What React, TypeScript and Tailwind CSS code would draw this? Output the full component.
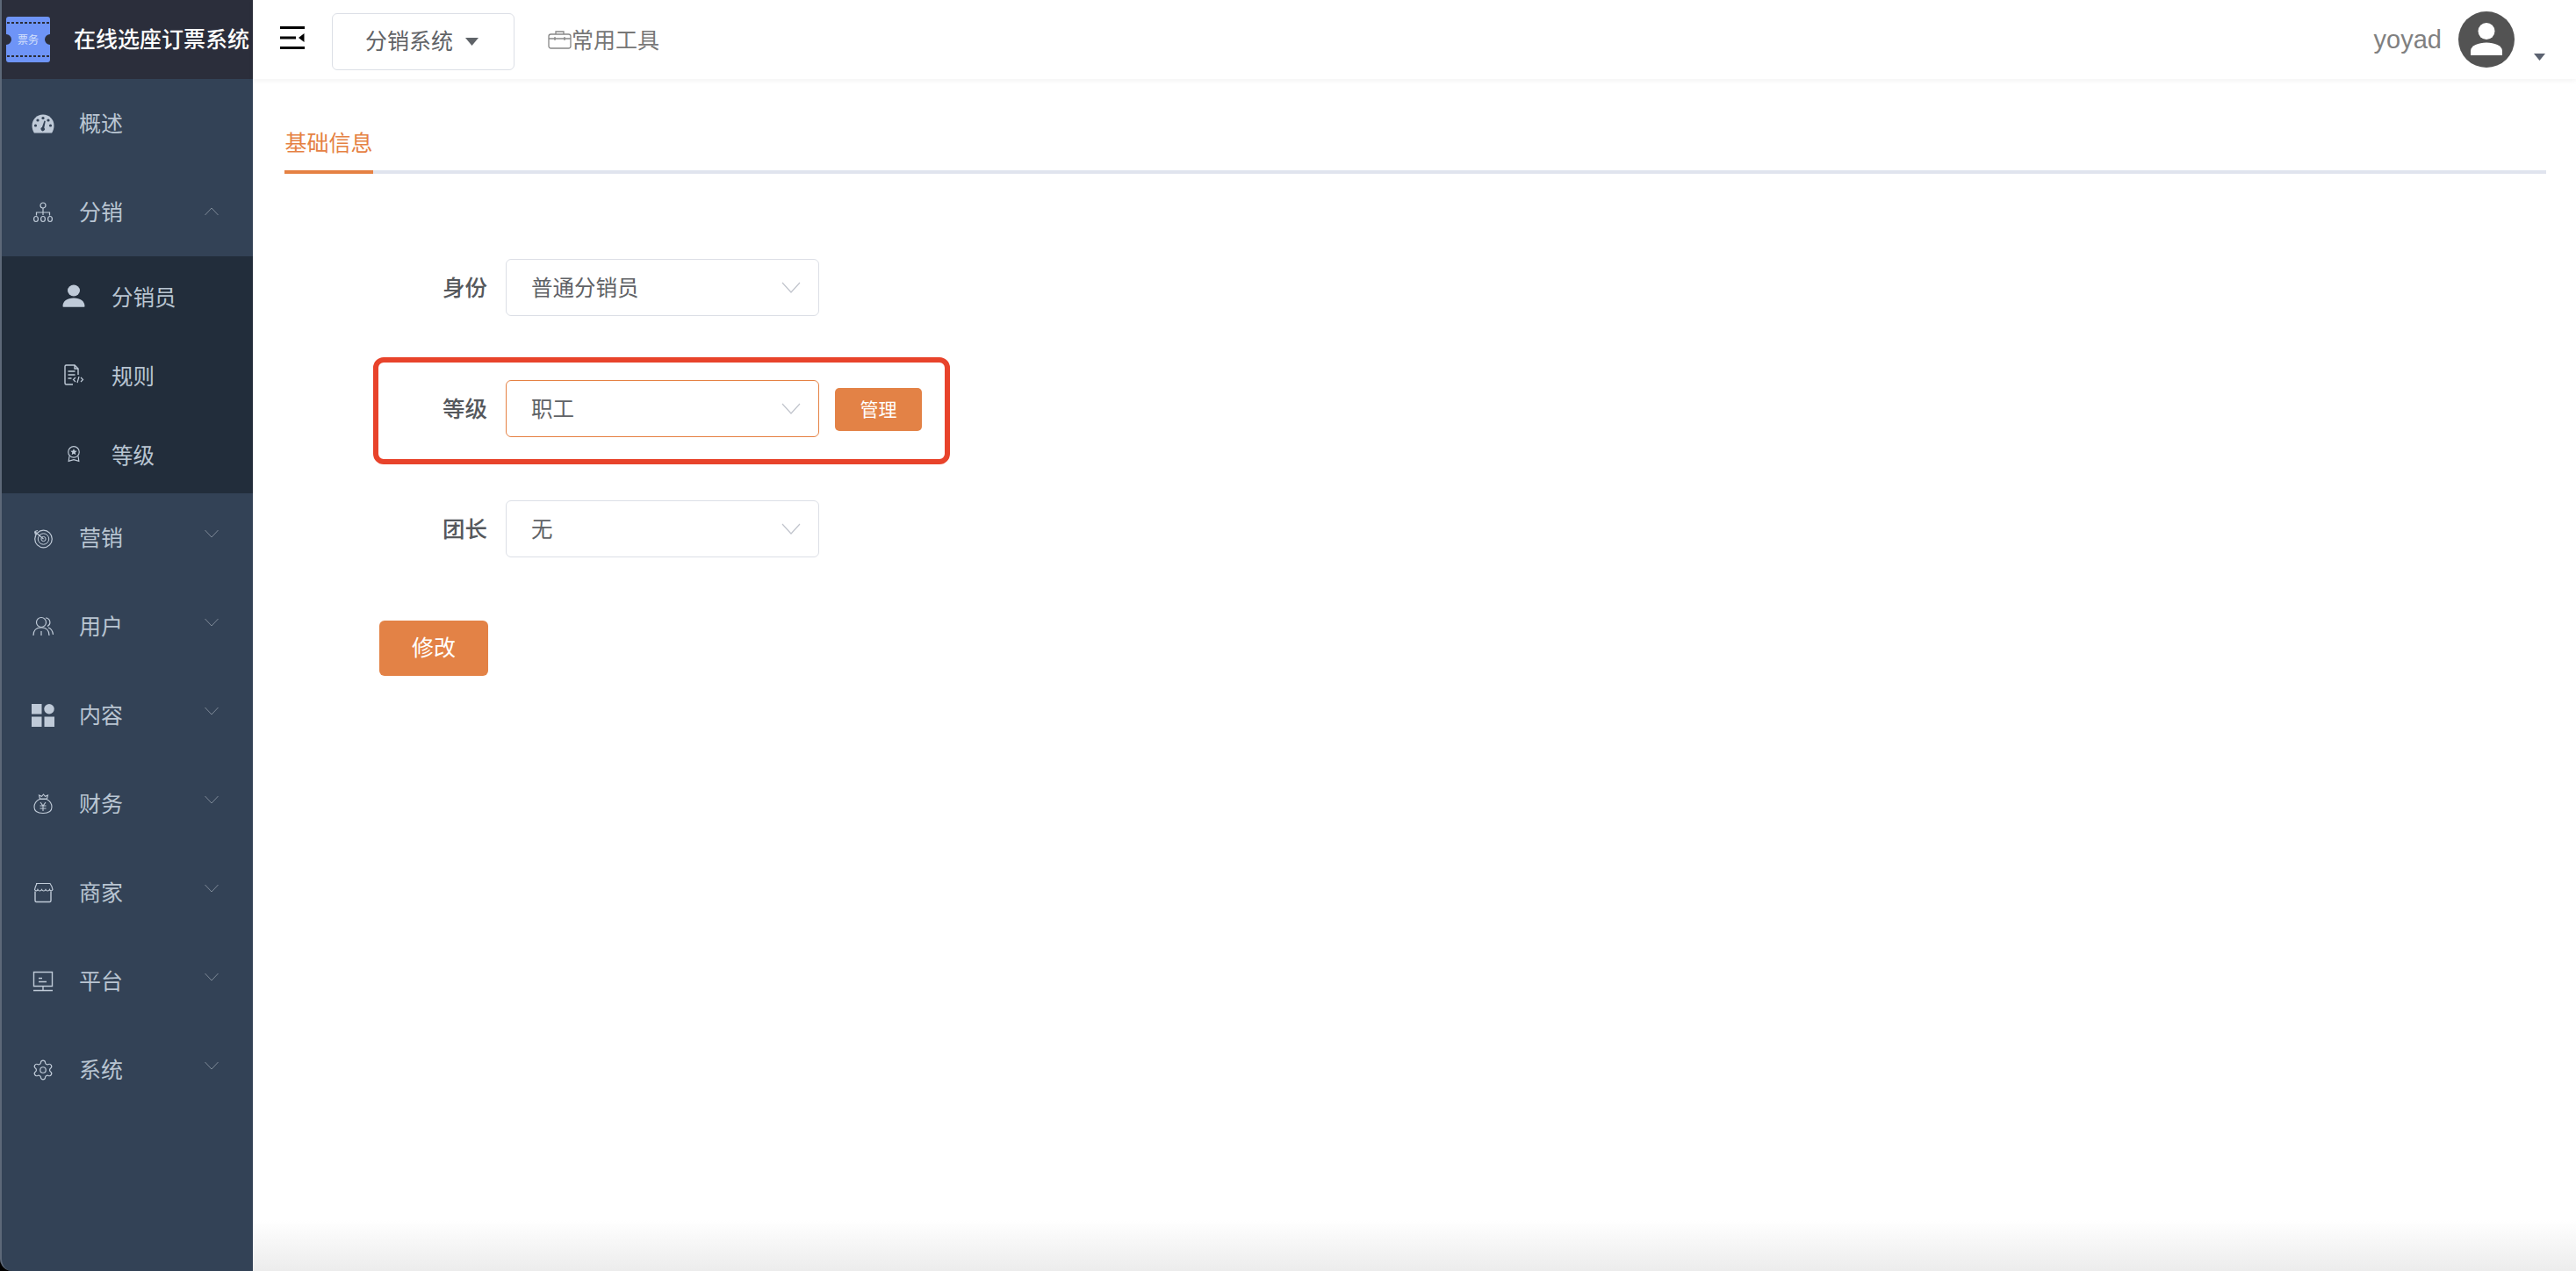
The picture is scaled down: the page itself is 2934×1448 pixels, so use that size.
import type { ReactNode } from "react";
import { Settings } from "lucide-react";

const fontStack = '"Liberation Sans", "Noto Sans CJK SC", sans-serif';

function Svg({ children, className = "w-6 h-6" }: { children: ReactNode; className?: string }) {
  return (
    <svg className={className} viewBox="0 0 24 24" fill="none" stroke="currentColor" strokeWidth="1.200">
      {children}
    </svg>
  );
}

const GaugeIcon = () => (
  <svg className="w-[26px] h-[22px] text-[#bfcad8]" viewBox="0 0 26 22" fill="currentColor">
    <path d="M13 0.5C6 0.5 0.5 6 0.5 13c0 3 .8 6 2.4 8.5h20.2c1.6-2.5 2.4-5.5 2.4-8.5C25.500 6 20 .5 13 .5z" />
    <g fill="#334256">
      <circle cx="13" cy="4.500" r="1.600" />
      <circle cx="7" cy="7" r="1.600" />
      <circle cx="19" cy="7" r="1.600" />
      <circle cx="4.500" cy="13" r="1.600" />
      <circle cx="21.500" cy="13" r="1.600" />
      <path d="M14.500 7.500 15.800 8 14.300 15.500a2.200 2.200 0 1 1-2.400-.5z" />
    </g>
  </svg>
);

const TreeIcon = () => (
  <Svg>
    <circle cx="12" cy="4" r="3" />
    <path d="M12 7v8M4.500 15.500V12h15v3.500" />
    <ellipse cx="4" cy="19.500" rx="2.400" ry="3" />
    <ellipse cx="12" cy="19.500" rx="2.400" ry="3" />
    <ellipse cx="20" cy="19.500" rx="2.400" ry="3" />
  </Svg>
);

const PersonIcon = () => (
  <svg className="w-[26px] h-[26px] text-[#bfcad8]" viewBox="0 0 26 26" fill="currentColor">
    <ellipse cx="13" cy="7" rx="7" ry="6.500" />
    <path d="M.5 25c0-6 5-9.500 12.500-9.500S25.500 19 25.500 25c0 .5-.3.800-.8.800H1.300c-.5 0-.8-.3-.8-.8z" />
  </svg>
);

const DocCodeIcon = () => (
  <Svg>
    <path d="M17 12V5l-4-4H3.500A1.500 1.500 0 0 0 2 2.500v19A1.500 1.500 0 0 0 3.500 23H11" strokeWidth="1.400" />
    <path d="M13 1v4h4M5.500 8h8M5.500 12h8M5.500 16h4" strokeWidth="1.400" />
    <path d="M14 15l-2.500 2.500L14 20M20 15l2.500 2.500L20 20M18 14l-2 7" strokeWidth="1.200" />
  </Svg>
);

const BadgeIcon = () => (
  <Svg className="w-5 h-5">
    <circle cx="12" cy="9.500" r="7.500" strokeWidth="1.400" />
    <path d="M12 5l1.300 2.900 3.100.3-2.300 2.100.7 3.100-2.800-1.600-2.800 1.600.7-3.100-2.300-2.100 3.100-.3z" fill="currentColor" stroke="none" />
    <path d="M6 15l-1 7 7-2 7 2-1-7" strokeWidth="1.400" />
  </Svg>
);

const TargetIcon = () => (
  <Svg>
    <circle cx="12.500" cy="13" r="9.800" strokeWidth="1.200" />
    <circle cx="12.500" cy="13" r="6.200" strokeWidth="1" />
    <circle cx="12.500" cy="13" r="2.600" strokeWidth="1" />
    <path d="M12.500 13 2.500 4.500M2.500 4.500l3.500-1M2.500 4.500l1 3.500" strokeWidth="1.200" />
  </Svg>
);

const UsersIcon = () => (
  <Svg>
    <circle cx="10" cy="7" r="5.500" />
    <path d="M1 22c0-6 3-9 9-9s9 3 9 9M10 17v5" />
    <path d="M15 2a5 5 0 0 1 2 9.500M18 13c3 1 5 4 5.500 8" />
  </Svg>
);

const GridIcon = () => (
  <svg className="w-[26px] h-[26px] text-[#bfcad8]" viewBox="0 0 26 26" fill="currentColor">
    <rect x="0" y="0" width="11.500" height="11.500" />
    <circle cx="20" cy="5.750" r="5.750" />
    <rect x="0" y="14.500" width="11.500" height="11.500" />
    <rect x="14.500" y="14.500" width="11.500" height="11.500" />
  </svg>
);

const MoneyBagIcon = () => (
  <Svg>
    <path d="M8.500 6 7.500 2l3 1.300L12.500 1l2 2.300 3-1.300-1 4z" strokeWidth="1.100" />
    <path d="M8 6.500c-4 2-6 5.500-6 9 0 4.500 3.500 7 10 7s10-2.500 10-7c0-3.500-2-7-6-9z" strokeWidth="1.100" />
    <path d="M9 10l3 4 3-4M8.500 14h7M8.500 17h7M12 14v6" strokeWidth="1.100" />
  </Svg>
);

const ShopIcon = () => (
  <Svg>
    <path d="M4 1.500h16c1.500 2 2.500 4 3 7-1 2-3 1.500-3.500 0-1 2-3.500 2-4.500 0-1 2-3.500 2-4.500 0-1 2-3.500 2-4.500 0-.5 1.500-2.500 2-3.500 0 .5-3 1.500-5 2.500-7z" />
    <path d="M3 10.500V21a1.500 1.500 0 0 0 1.500 1.500h15A1.500 1.500 0 0 0 21 21V10.500" strokeWidth="1.400" />
  </Svg>
);

const MonitorIcon = () => (
  <Svg>
    <path d="M1.500 1.500h21v16h-21zM7 8.500h4M7 12.500h9M1 22.500h22M12 18v4" strokeWidth="1.400" />
  </Svg>
);

function Chevron({ up = false }: { up?: boolean }) {
  return (
    <svg className="w-4 h-[10px] text-[#7f8a98]" viewBox="0 0 16 10" fill="none" stroke="currentColor" strokeWidth="1">
      <path d={up ? "M.5 9 8 1l7.500 8" : "M.5 1 8 9l7.500-8"} />
    </svg>
  );
}

function NavItem({ icon, label, open = false, arrow = true }: { icon: ReactNode; label: string; open?: boolean; arrow?: boolean }) {
  return (
    <div className="h-[101px] flex items-center pl-[34px] pr-[39px] text-[#c0cbd8]">
      <div className="w-[26px] flex justify-center shrink-0">{icon}</div>
      <span className="ml-7 text-[25px] text-[#b9c5d2] translate-y-[1px]">{label}</span>
      {arrow && (
        <div className={open ? "ml-auto -translate-y-[1px]" : "ml-auto -translate-y-[5px]"}>
          <Chevron up={open} />
        </div>
      )}
    </div>
  );
}

function SubItem({ icon, label }: { icon: ReactNode; label: string }) {
  return (
    <div className="h-[90px] flex items-center pl-[69px] text-[#c0cbd8]">
      <div className="w-[26px] flex justify-center shrink-0">{icon}</div>
      <span className="ml-[30px] text-[24.500px] text-[#b9c5d2] translate-y-[3px]">{label}</span>
    </div>
  );
}

function Sidebar() {
  return (
    <aside className="w-[288px] shrink-0 border-l-2 border-[#5d6878] rounded-bl-[14px] bg-[#334256] flex flex-col overflow-hidden">
      <div className="h-[90px] bg-[#2b2e3b] flex items-center shrink-0">
        <svg className="w-[50px] h-[52px] ml-[5px] shrink-0" viewBox="0 0 50 52">
          <path d="M3 0h44a3 3 0 0 1 3 3v17a6 6 0 0 0 0 12v17a3 3 0 0 1-3 3H3a3 3 0 0 1-3-3V32a6 6 0 0 0 0-12V3a3 3 0 0 1 3-3z" fill="#6e94f7" />
          <path d="M1 7h48M1 45h48" stroke="#2b2e3b" strokeWidth="2" strokeDasharray="3 2" />
          <text x="25" y="31" textAnchor="middle" fontSize="12" fill="#d5e0fb">票务</text>
        </svg>
        <span className="ml-[27px] text-[25px] text-white font-medium whitespace-nowrap translate-y-[1px]">在线选座订票系统</span>
      </div>
      <NavItem icon={<GaugeIcon />} label="概述" arrow={false} />
      <NavItem icon={<TreeIcon />} label="分销" open />
      <div className="bg-[#222d3b]">
        <SubItem icon={<PersonIcon />} label="分销员" />
        <SubItem icon={<DocCodeIcon />} label="规则" />
        <SubItem icon={<BadgeIcon />} label="等级" />
      </div>
      <NavItem icon={<TargetIcon />} label="营销" />
      <NavItem icon={<UsersIcon />} label="用户" />
      <NavItem icon={<GridIcon />} label="内容" />
      <NavItem icon={<MoneyBagIcon />} label="财务" />
      <NavItem icon={<ShopIcon />} label="商家" />
      <NavItem icon={<MonitorIcon />} label="平台" />
      <NavItem icon={<Settings size={28} strokeWidth={1.1} />} label="系统" />
    </aside>
  );
}

function Header() {
  return (
    <header className="h-[90px] shrink-0 bg-white shadow-[0_2px_6px_rgba(0,0,0,0.05)] flex items-center pl-[31px] pr-[35px]">
      <svg className="w-7 h-[26px] -translate-y-[2px]" viewBox="0 0 28 26" fill="#000">
        <rect x="0" y="0" width="28" height="3" />
        <rect x="0" y="11.500" width="18" height="3" />
        <rect x="0" y="23" width="28" height="3" />
        <path d="M27.500 8v10L21 13z" />
      </svg>
      <div className="ml-[31px] w-[208px] h-[65px] border border-[#dcdfe6] rounded-[6px] flex items-center pl-[37px] text-[#606266] text-[25px] translate-y-[2px]">
        <span className="translate-y-[1px]">分销系统</span>
        <svg className="ml-[14px] w-[15px] h-[9px]" viewBox="0 0 15 9" fill="#5f6368">
          <path d="M0 0h15L7.500 9z" />
        </svg>
      </div>
      <svg className="ml-[38px] w-[27px] h-[22px] text-[#888]" viewBox="0 0 27 22" fill="none" stroke="currentColor" strokeWidth="1.300">
        <rect x="1" y="5" width="25" height="16" rx="2.500" />
        <path d="M9 5V2h9v3M1 10h25M8 8v4M19 8v4" />
      </svg>
      <span className="text-[#777] text-[25px] translate-y-[2px]">常用工具</span>
      <div className="ml-auto flex items-center">
        <span className="text-[#808080] text-[29px] translate-y-[1px]">yoyad</span>
        <svg className="ml-[19px] w-16 h-16" viewBox="0 0 64 64">
          <circle cx="32" cy="32" r="32" fill="#535353" />
          <circle cx="32" cy="22.500" r="9.500" fill="#fff" />
          <path d="M14 50v-5c0-6 9-9.500 18-9.500S50 39 50 45v5z" fill="#fff" />
        </svg>
        <svg className="ml-[22px] w-[13px] h-2 translate-y-[20px]" viewBox="0 0 13 8" fill="#5b6270">
          <path d="M0 0h13L6.500 8z" />
        </svg>
      </div>
    </header>
  );
}

function SelectBox({ value, focused = false }: { value: string; focused?: boolean }) {
  return (
    <div
      className={
        "w-[357px] h-[65px] rounded-[6px] border flex items-center pl-[28px] pr-[20px] bg-white text-[#606266] text-[24.500px] " +
        (focused ? "border-[#e58143]" : "border-[#dcdfe6]")
      }
    >
      <span className="translate-y-[2px]">{value}</span>
      <svg className="ml-auto w-[22px] h-[13px] text-[#c0c4cc]" viewBox="0 0 22 13" fill="none" stroke="currentColor" strokeWidth="1.200">
        <path d="M1 1l10 11L21 1" />
      </svg>
    </div>
  );
}

function FieldLabel({ children }: { children: ReactNode }) {
  return <label className="w-[52px] text-[#55585c] text-[25.500px] font-medium text-right mr-[21px] whitespace-nowrap translate-y-[1px]">{children}</label>;
}

function MainContent() {
  return (
    <main className="flex-1 pl-[36px] pr-[34px] pt-[58px]">
      <div className="border-b-4 border-[#e0e4ee] h-[50px]">
        <div className="w-[101px] h-[50px] -mb-1 border-b-4 border-[#e58143] text-[#e58143] text-[25px] text-center leading-[28px] pt-[1px]">
          基础信息
        </div>
      </div>

      <form className="mt-[97px] ml-[101px]">
        <div className="flex items-center ml-[78px] w-fit">
          <FieldLabel>身份</FieldLabel>
          <SelectBox value="普通分销员" />
        </div>

        <div className="mt-[47px] w-[657px] h-[122px] border-[6px] border-[#e8432b] rounded-[12px] flex items-center pl-[72px] pb-[5px]">
          <FieldLabel>等级</FieldLabel>
          <SelectBox value="职工" focused />
          <button type="button" className="ml-[18px] w-[99px] h-[49px] rounded-[5px] bg-[#e38246] text-white text-[21px] translate-y-[1px]">
            管理
          </button>
        </div>

        <div className="mt-[41px] flex items-center ml-[78px] w-fit">
          <FieldLabel>团长</FieldLabel>
          <SelectBox value="无" />
        </div>

        <button type="button" className="mt-[72px] ml-[7px] block w-[124px] h-[63px] rounded-[6px] bg-[#e38246] text-white text-[25px]">
          修改
        </button>
      </form>
    </main>
  );
}

export default function App() {
  return (
    <div className="w-[2934px] h-[1448px] flex overflow-hidden bg-black" style={{ fontFamily: fontStack }}>
      <Sidebar />
      <div className="flex-1 flex flex-col bg-white">
        <Header />
        <MainContent />
        <div className="h-[58px] shrink-0 bg-gradient-to-b from-white to-[#ececec]" />
      </div>
    </div>
  );
}
